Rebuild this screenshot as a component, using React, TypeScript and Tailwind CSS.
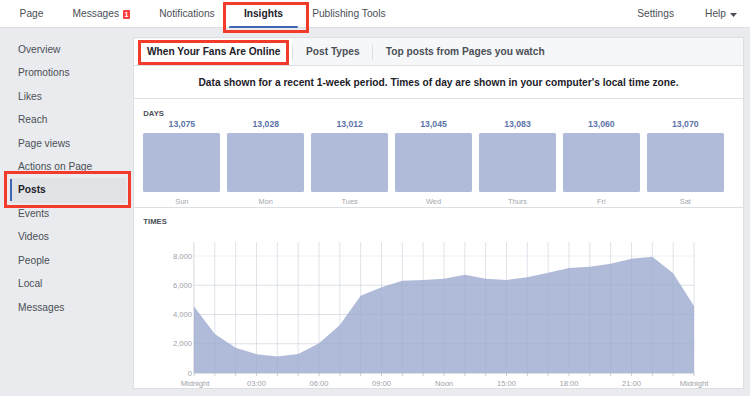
import React from "react";

const font = { fontFamily: '"Liberation Sans", Arial, Helvetica, sans-serif' };

const navLeft = ["Page", "Messages", "Notifications", "Insights", "Publishing Tools"];

const sideItems = [
  "Overview",
  "Promotions",
  "Likes",
  "Reach",
  "Page views",
  "Actions on Page",
  "Posts",
  "Events",
  "Videos",
  "People",
  "Local",
  "Messages",
];

const days = [
  { day: "Sun", value: "13,075" },
  { day: "Mon", value: "13,028" },
  { day: "Tues", value: "13,012" },
  { day: "Wed", value: "13,045" },
  { day: "Thurs", value: "13,083" },
  { day: "Fri", value: "13,060" },
  { day: "Sat", value: "13,070" },
];

// fans online per hour, midnight to midnight
const hourly = [
  4550, 2660, 1730, 1280, 1120, 1300, 2030, 3280, 5290, 5860, 6310, 6360, 6450, 6720, 6450, 6360, 6540,
  6860, 7180, 7270, 7470, 7810, 7950, 6820, 4580,
];

const X0 = 194;
const X1 = 694;
const Y0 = 373;
const PER = 117 / 8000;
const TOP = 242;

const px = (h: number) => X0 + (h * (X1 - X0)) / 24;
const py = (v: number) => Y0 - v * PER;

function TimesChart() {
  const pts = hourly.map((v, i) => `${px(i).toFixed(2)},${py(v).toFixed(2)}`).join(" ");
  const area = `${X0},${Y0} ${pts} ${X1},${Y0}`;
  const xLabels = [
    { h: 0, t: "Midnight" },
    { h: 3, t: "03:00" },
    { h: 6, t: "06:00" },
    { h: 9, t: "09:00" },
    { h: 12, t: "Noon" },
    { h: 15, t: "15:00" },
    { h: 18, t: "18:00" },
    { h: 21, t: "21:00" },
    { h: 24, t: "Midnight" },
  ];
  return (
    <svg width={609} height={158} className="mt-[4px] block">
      <g transform="translate(-134,-230)" style={font}>
        {Array.from({ length: 25 }).map((_, i) => (
          <line key={`v${i}`} x1={px(i)} x2={px(i)} y1={TOP} y2={Y0} stroke="#eef0f2" strokeWidth={1} />
        ))}
        {[2000, 4000, 6000, 8000].map((v) => (
          <line key={`h${v}`} x1={X0} x2={X1} y1={py(v)} y2={py(v)} stroke="#eef0f2" strokeWidth={1} />
        ))}
        <polygon points={area} fill="#afbbd8" />
        {Array.from({ length: 25 }).map((_, i) => (
          <line key={`o${i}`} x1={px(i)} x2={px(i)} y1={TOP} y2={Y0} stroke="#8f9dc2" strokeOpacity={0.14} strokeWidth={1} />
        ))}
        {[2000, 4000, 6000].map((v) => (
          <line key={`p${v}`} x1={X0} x2={X1} y1={py(v)} y2={py(v)} stroke="#8f9dc2" strokeOpacity={0.18} strokeWidth={1} />
        ))}
        <line x1={X0} x2={X1} y1={Y0 + 0.5} y2={Y0 + 0.5} stroke="#dddfe2" />
        <line x1={X0 - 0.5} x2={X0 - 0.5} y1={TOP} y2={Y0} stroke="#e4e6ea" />
        {Array.from({ length: 25 }).map((_, i) => (
          <line key={`t${i}`} x1={px(i)} x2={px(i)} y1={Y0} y2={Y0 + 3} stroke="#c9ccd1" strokeWidth={1} />
        ))}
        {[0, 2000, 4000, 6000, 8000].map((v) => (
          <text key={`y${v}`} x={192} y={py(v) + 2.7} textAnchor="end" fontSize={7.6} fill="#9ca0a8">
            {v === 0 ? "0" : v.toLocaleString("en-US")}
          </text>
        ))}
        {xLabels.map((l, i) => (
          <text key={`x${i}`} x={px(l.h) + (i === 0 ? 1 : 0)} y={385.7} textAnchor="middle" fontSize={7.6} fill="#9ca0a8">
            {l.t}
          </text>
        ))}
      </g>
    </svg>
  );
}

export default function App() {
  return (
    <div className="relative h-[396px] w-[750px] overflow-hidden bg-[#e9ebee] text-[#4b4f56]" style={font}>
      {/* top nav */}
      <div className="flex h-[28px] items-stretch border-b border-[#dddfe2] bg-white pl-[5px] pr-[13px] text-[10.2px]">
        {navLeft.map((item) => (
          <div
            key={item}
            className={`relative flex items-center px-[14.6px] pt-[1px] ${
              item === "Insights" ? "font-bold text-[#1d2129]" : "text-[#4b4f56]"
            }`}
          >
            {item}
            {item === "Messages" && (
              <span className="ml-[4px] flex h-[9px] w-[7px] items-center justify-center rounded-[1px] bg-[#fa3e3e] text-[7px] font-bold leading-none text-white">
                1
              </span>
            )}
            {item === "Insights" && (
              <span className="absolute bottom-[-1px] left-0 right-0 h-[2.3px] rounded-full bg-[#4267b2]" />
            )}
          </div>
        ))}
        <div className="flex-1" />
        <div className="flex items-center pr-[31px] pt-[1px]">Settings</div>
        <div className="flex items-center pt-[1px]">
          Help
          <svg width="7" height="4" viewBox="0 0 7 4" className="ml-[4px] mt-[1px]">
            <path d="M0 0h7L3.5 4z" fill="#4b4f56" />
          </svg>
        </div>
      </div>

      <div className="flex">
        {/* sidebar */}
        <div className="w-[133px] pt-[9.8px] text-[10.2px]">
          {sideItems.map((item) => (
            <div key={item} className="flex h-[23.43px] items-center">
              {item === "Posts" ? (
                <div className="ml-[10px] flex h-[25px] w-[116px] items-center bg-[#e2e3e7]">
                  <span className="h-[22px] w-[1.5px] bg-[#4267b2]" />
                  <span className="ml-[6.5px] font-bold text-[#1d2129]">Posts</span>
                </div>
              ) : (
                <span className="pl-[18px]">{item}</span>
              )}
            </div>
          ))}
        </div>

        {/* main panel */}
        <div className="mt-[9px] flex h-[352px] w-[611px] flex-col border border-[#dddfe2] bg-white">
          <div className="flex h-[28px] items-center border-b border-[#dddfe2] bg-[#f6f7f9] pt-[1px] text-[10.2px] font-bold text-[#1d2129]">
            <div className="flex h-full items-center bg-white pl-[13px] pr-[12px]">When Your Fans Are Online</div>
            <span className="h-[15px] w-px bg-[#dddfe2]" />
            <div className="px-[12.6px] text-[#4b4f56]">Post Types</div>
            <span className="h-[15px] w-px bg-[#dddfe2]" />
            <div className="px-[12.6px] text-[#4b4f56]">Top posts from Pages you watch</div>
          </div>

          <div className="flex h-[33px] items-center justify-center border-b border-[#dddfe2] pt-[1px] text-[10.2px] font-bold text-[#1d2129]">
            Data shown for a recent 1-week period. Times of day are shown in your computer's local time zone.
          </div>

          <div className="h-[109px] border-b border-[#dddfe2] pl-[9.3px] pt-[9.5px]">
            <div className="text-[7.7px] font-bold leading-[9px] text-[#4b4f56]">DAYS</div>
            <div className="mt-[0.5px] flex w-[580.5px] gap-[6.8px]">
              {days.map((d) => (
                <div key={d.day} className="flex flex-1 flex-col items-center">
                  <div className="h-[12px] text-[8.7px] font-bold leading-[12px] text-[#5b74a8]">{d.value}</div>
                  <div className="mt-[3px] h-[59px] w-full rounded-[1.5px] bg-[#afbbd8]" />
                  <div className="mt-[3.5px] text-[7.4px] leading-[12px] text-[#a3a7ae]">{d.day}</div>
                </div>
              ))}
            </div>
          </div>

          <div className="flex flex-1 flex-col">
            <div className="pl-[9.3px] pt-[9px] text-[7.7px] font-bold leading-[9px] text-[#4b4f56]">TIMES</div>
            <TimesChart />
          </div>
        </div>
      </div>

      {/* annotation boxes */}
      <div className="pointer-events-none absolute left-[223px] top-[2px] h-[31px] w-[86px] border-[3px] border-[#f33b2b]" />
      <div className="pointer-events-none absolute left-[138px] top-[40px] h-[25px] w-[151px] border-[3px] border-[#f33b2b]" />
      <div className="pointer-events-none absolute left-[4px] top-[171px] h-[37px] w-[127px] border-[3px] border-[#f33b2b]" />
    </div>
  );
}
